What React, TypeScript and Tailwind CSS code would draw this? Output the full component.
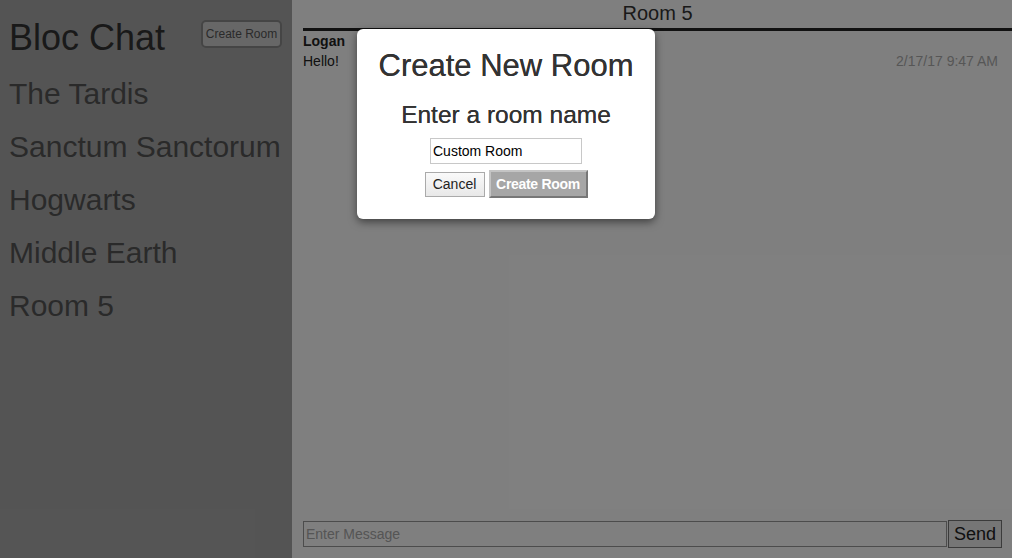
export default function App() {
  const rooms = ["The Tardis", "Sanctum Sanctorum", "Hogwarts", "Middle Earth", "Room 5"];
  return (
    <div className="relative flex h-[558px] w-[1012px] overflow-hidden bg-white font-['Liberation_Sans',Arial,sans-serif]">
      {/* sidebar */}
      <aside className="flex w-[292px] shrink-0 flex-col bg-[#a9a9a9] pl-[9px] pr-[10px]">
        <div className="flex items-start justify-between pt-[17px]">
          <h1 className="text-[36px] leading-[42px] text-[#333]">Bloc Chat</h1>
          <button className="mt-[3px] h-[28px] w-[81px] rounded-[5px] border-2 border-[#8a8a8a] bg-[#cfcfcf] text-[12px] text-[#555]">
            Create Room
          </button>
        </div>
        <ul className="mt-[8px] flex flex-col">
          {rooms.map((r) => (
            <li key={r} className="h-[53px] text-[30px] leading-[53px] text-[#555]">
              {r}
            </li>
          ))}
        </ul>
      </aside>

      {/* main */}
      <main className="flex flex-1 flex-col pl-[11px] pr-[10px]">
        <div className="mr-[-10px] border-b-[3px] border-[#222] pb-[1px] text-center text-[20px] leading-[27px] text-[#333]">
          Room 5
        </div>
        <div className="text-[14px] leading-[20px] text-[#222]">
          <div className="font-bold">Logan</div>
          <div className="flex justify-between pr-[4px]">
            <span>Hello!</span>
            <span className="text-[#adadad]">2/17/17 9:47 AM</span>
          </div>
        </div>
        <div className="flex-1" />
        <div className="mb-[10px] flex items-center">
          <input
            className="h-[26px] flex-1 border border-[#999] bg-white px-[2px] text-[14px] outline-none placeholder:text-[#aaa]"
            placeholder="Enter Message"
          />
          <button className="ml-px h-[28px] w-[54px] border border-[#777] bg-[#ececec] text-[18px] text-[#222]">
            Send
          </button>
        </div>
      </main>

      {/* overlay */}
      <div className="absolute inset-0 bg-black/50" />

      {/* modal */}
      <div className="absolute left-[357px] top-[29px] flex h-[190px] w-[298px] flex-col items-center rounded-[6px] bg-white shadow-[0_3px_9px_rgba(0,0,0,0.5)]">
        <h2 className="mt-[20px] text-[31px] leading-[34px] text-[#333] [text-shadow:0_0_0.4px_#333]">Create New Room</h2>
        <h3 className="mt-[18px] text-[24.5px] leading-[28px] text-[#333] [text-shadow:0_0_0.4px_#333]">Enter a room name</h3>
        <input
          className="mt-[9px] h-[26px] w-[152px] border border-[#c8c8c8] px-[2px] text-[14px] text-black outline-none"
          defaultValue="Custom Room"
        />
        <div className="mt-[6px] flex items-center gap-[4px]">
          <button className="h-[25px] w-[60px] border border-[#aaa] bg-gradient-to-b from-[#fafafa] to-[#e8e8e8] text-[14px] text-[#222]">
            Cancel
          </button>
          <button className="h-[28px] w-[99px] border-2 border-t-[#c4c4c4] border-l-[#c4c4c4] border-b-[#777] border-r-[#777] bg-[#a6a6a6] text-[14px] font-bold tracking-[-0.3px] text-white">
            Create Room
          </button>
        </div>
      </div>
    </div>
  );
}
